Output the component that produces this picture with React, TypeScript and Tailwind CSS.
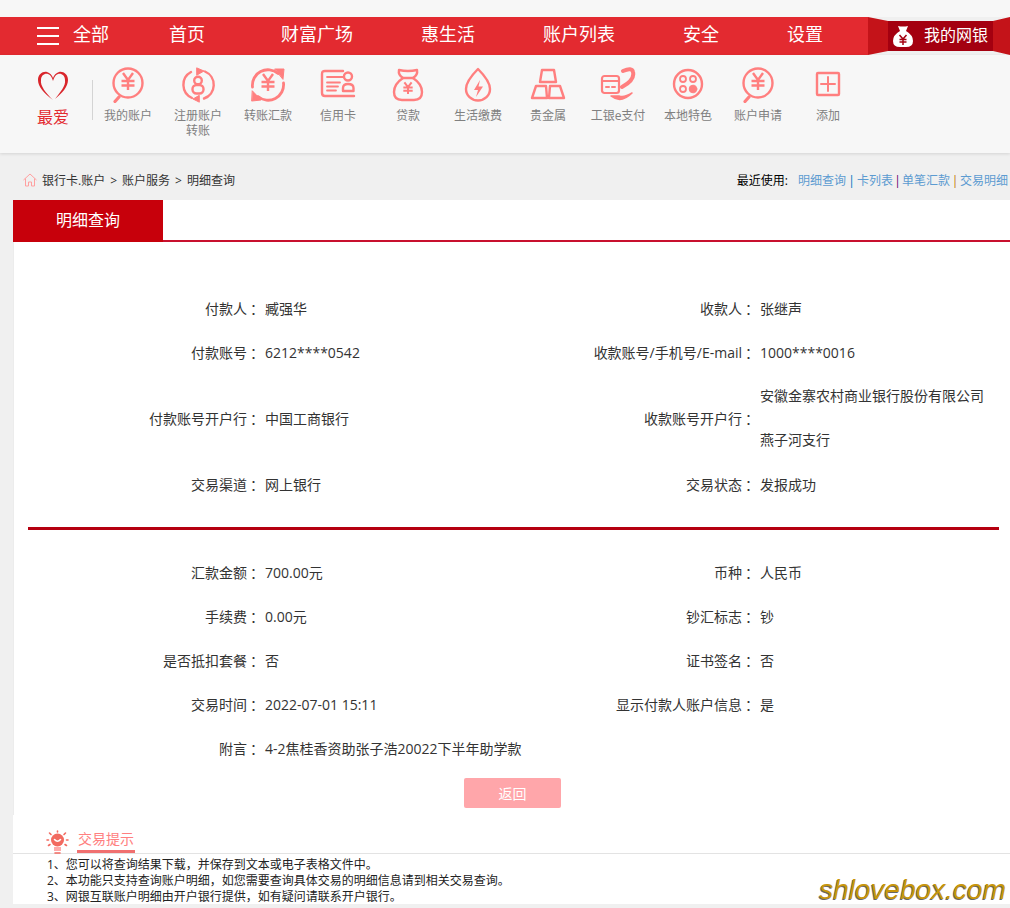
const C = "#ff7f7f";

const S = ({ children, w = 36 }: { children: React.ReactNode; w?: number }) => (
  <svg width={w} height={36} viewBox="0 0 36 36" fill="none" stroke={C} strokeWidth={2} strokeLinecap="round" strokeLinejoin="round">{children}</svg>
);

const Yen = ({ x = 18, y = 10, s = 1 }: { x?: number; y?: number; s?: number }) => (
  <g transform={`translate(${x} ${y}) scale(${s})`} strokeWidth={2.4} strokeLinecap="butt" strokeLinejoin="miter">
    <path d="M-5 -6 L0 1 L5 -6 M-6.500 2 H6.500 M-6.500 6.500 H6.500 M0 1 V11" />
  </g>
);

const icons: Record<string, React.ReactNode> = {
  coin: (
    <S>
      <circle cx="18" cy="16" r="14.5" strokeWidth="2.4" />
      <path d="M9 30 L5 34.500" strokeWidth="3.200" />
      <Yen x={18} y={12} />
    </S>
  ),
  reg: (
    <S>
      <path d="M11 5 A14.500 14.500 0 0 0 12 31 M25 4.500 A14.500 14.500 0 0 1 24 31.500" strokeWidth="2.4" />
      <path d="M17 1 L24 4 L17 8 Z M19 28.500 L13 32 L19 35 Z" fill={C} strokeWidth="1" />
      <circle cx="18" cy="13.500" r="3.800" strokeWidth="2.400" />
      <rect x="12.500" y="18" width="11" height="8.500" rx="4" strokeWidth="2.400" />
    </S>
  ),
  transfer: (
    <S>
      <path d="M2.500 20 A15.500 15.500 0 0 1 28 6.500 M33.500 16 A15.500 15.500 0 0 1 8 29.500" strokeWidth="2.800" />
      <path d="M25 2 L34 2 L33 12 Z M2.500 24 L11 33 L2 34 Z" fill={C} strokeWidth="1" />
      <Yen x={18} y={13} />
    </S>
  ),
  card: (
    <S>
      <path d="M23 4 H5 Q2 4 2 7 V26 Q2 29 5 29 H34" strokeWidth="2.400" />
      <path d="M7 10 H23 M7 15.500 H20 M7 19.500 H18 M7 23.500 H16" strokeWidth="1.800" />
      <circle cx="28" cy="9.500" r="4" strokeWidth="2.400" />
      <path d="M23 24 V21 Q23 17 28 17 Q33.500 17 33.500 21 V24 Z" strokeWidth="2.400" />
    </S>
  ),
  bag: (
    <S>
      <path d="M9 3 Q18 5 27 3 Q28 8 23 11 H13 Q8 8 9 3 Z" strokeWidth="2.400" />
      <path d="M13 11 Q4 17 4 25 Q4 33 12 33 H24 Q32 33 32 25 Q32 17 23 11" strokeWidth="2.400" />
      <g transform="translate(18 19) scale(.72)" strokeLinecap="butt"><path d="M-5 -5 L0 1.500 L5 -5 M-6.500 2 H6.500 M-6.500 6.500 H6.500 M0 1.500 V11" strokeWidth="2.800" /></g>
    </S>
  ),
  drop: (
    <S>
      <path d="M18 2 Q6 14 6 22 A12 11.500 0 0 0 30 22 Q30 14 18 2 Z" strokeWidth="2.400" />
      <path d="M20 13 L14 23 H18 L16 30 L23 19.500 H18.500 Z" fill={C} stroke="none" />
    </S>
  ),
  gold: (
    <S>
      <path d="M12 3 H24 L26 15 H10 Z M6 19 H16 L17 31 H2 Z M20 19 H30 L34 31 H19 Z" strokeWidth="2.400" />
    </S>
  ),
  pay: (
    <S>
      <path d="M23 4 Q32 0 33 5 Q35 13 22 20" strokeWidth="4" />
      <path d="M11 29 Q21 37 32 26 Q24 31 19 29 Z" fill={C} strokeWidth="1.500" />
      <rect x="2" y="9" width="17" height="17" rx="2.500" fill="#f7f7f7" strokeWidth="2.200" />
      <path d="M3 14 H18" strokeWidth="2.200" />
      <path d="M6 20 H9 M12 20 H15" strokeWidth="2" />
    </S>
  ),
  local: (
    <S>
      <circle cx="18" cy="17" r="14" strokeWidth="2.400" />
      <circle cx="13" cy="12" r="3" strokeWidth="1.800" />
      <circle cx="23" cy="12" r="3" strokeWidth="1.800" />
      <circle cx="13" cy="22" r="3" strokeWidth="1.800" />
      <circle cx="23" cy="22" r="3.800" fill={C} strokeWidth="1" />
    </S>
  ),
  add: (
    <S>
      <rect x="7" y="6" width="22" height="22" rx="1" strokeWidth="2.400" />
      <path d="M18 10 V24 M11 17 H25" strokeWidth="2" />
    </S>
  ),
};

const tools: { cx: number; icon: string; lines: string[] }[] = [
  { cx: 128, icon: "coin", lines: ["我的账户"] },
  { cx: 198, icon: "reg", lines: ["注册账户", "转账"] },
  { cx: 268, icon: "transfer", lines: ["转账汇款"] },
  { cx: 338, icon: "card", lines: ["信用卡"] },
  { cx: 408, icon: "bag", lines: ["贷款"] },
  { cx: 478, icon: "drop", lines: ["生活缴费"] },
  { cx: 548, icon: "gold", lines: ["贵金属"] },
  { cx: 618, icon: "pay", lines: ["工银e支付"] },
  { cx: 688, icon: "local", lines: ["本地特色"] },
  { cx: 758, icon: "coin", lines: ["账户申请"] },
  { cx: 828, icon: "add", lines: ["添加"] },
];

const navItems: [string, string][] = [
  ["首页", "w-[112px]"],
  ["财富广场", "w-[140px]"],
  ["惠生活", "w-[122px]"],
  ["账户列表", "w-[140px]"],
  ["安全", "w-[104px]"],
  ["设置", "w-[60px]"],
];

function Row({ l1, v1, l2, v2, tall }: { l1: string; v1: string; l2?: string; v2?: React.ReactNode; tall?: boolean }) {
  return (
    <div className={`flex items-center whitespace-nowrap ${tall ? "h-[88px]" : "h-[44px]"}`}>
      <div className="w-[234px] text-right">{l1}</div>
      <div className="w-[18px] pl-[3px]">：</div>
      <div className="w-[245px]">{v1}</div>
      {l2 && <div className="w-[232px] text-right">{l2}</div>}
      {l2 && <div className="w-[18px] pl-[3px]">：</div>}
      {v2 && <div className="w-[240px]">{v2}</div>}
    </div>
  );
}

export default function App() {
  return (
    <div className="w-[1010px] h-[908px] overflow-hidden bg-[#f0f0f0] text-[14px] text-[#333333] font-['Open_Sans','Noto_Sans_CJK_SC',sans-serif]">
      {/* header */}
      <div className="h-[17px] bg-[#f7f7f7]" />
      <div className="relative h-[38px] bg-[#e32a30] flex items-center text-white text-[18px]">
        <div className="ml-[37px] w-[22px] flex flex-col gap-[6px]">
          <div className="h-[2px] bg-white" />
          <div className="h-[2px] bg-white" />
          <div className="h-[2px] bg-white" />
        </div>
        <div className="ml-[14px] w-[96px] mb-[3px]">全部</div>
        {navItems.map(([t, w]) => (
          <div key={t} className={`${w} mb-[3px]`}>{t}</div>
        ))}
        <div className="absolute left-[868px] top-0 w-[142px] h-[38px] bg-[#f0f0f0]" />
        <div className="absolute left-[868px] top-0 w-[142px] h-[38px] bg-[#c41319] [clip-path:polygon(0_0,20px_4px,125px_4px,142px_0,142px_38px,125px_34px,20px_34px,0_38px)]" />
        <div className="absolute left-[888px] top-[4px] w-[105px] h-[30px] bg-[#a40010] flex items-center text-[16px]">
          <svg className="ml-[5px]" width="20" height="22" viewBox="0 0 20 22">
            <path d="M5 1 Q10 2 15 1 L13 6 Q20 10 20 16 Q20 22 13 22 H7 Q0 22 0 16 Q0 10 7 6 Z" fill="#fff" />
            <path d="M6.500 10 L10 14 L13.500 10 M6.500 14.500 H13.500 M6.500 17 H13.500 M10 14 V20" stroke="#a40010" strokeWidth="1.500" fill="none" />
          </svg>
          <span className="ml-[11px] mb-[3px]">我的网银</span>
        </div>
      </div>

      {/* toolbar */}
      <div className="relative h-[98px] bg-[#f7f7f7] shadow-[0_1px_3px_rgba(0,0,0,0.12)]">
        <div className="absolute left-[36px] top-[15px] flex flex-col items-center w-[34px]">
          <svg width="32" height="32" viewBox="0 0 32 32" fill="none">
            <path d="M16 30 C7 23 1 17 1 10 C1 4 6 1 10 2 C13 3 15 5 16 8 C17 5 19 3 22 2 C26 1 31 4 31 10 C31 17 25 23 18 29 C23 22 29 16 28 10 C28 5 24 3 21 4 C18 5 17 8 16 11 C15 8 14 5 11 4 C8 3 4 5 4 10 C3 16 9 23 16 30 Z" fill="#d9252b" />
          </svg>
          <div className="mt-[4px] text-[16px] leading-[22px] text-[#e32a30] whitespace-nowrap">最爱</div>
        </div>
        <div className="absolute left-[92px] top-[25px] w-px h-[40px] bg-[#d4d4d4]" />
        <div className="absolute left-[93px] top-[12px] flex">
          {tools.map((t) => (
            <div key={t.cx} className="w-[70px] flex flex-col items-center text-[12px] leading-[15px] text-[#808080]">
              <div className="h-[41px]">{icons[t.icon]}</div>
              {t.lines.map((x) => (
                <div key={x} className="whitespace-nowrap">{x}</div>
              ))}
            </div>
          ))}
        </div>
      </div>

      {/* breadcrumb */}
      <div className="h-[47px] pt-[9px] flex items-center text-[12px] whitespace-nowrap">
        <svg className="ml-[23px] mb-[2px]" width="14" height="14" viewBox="0 0 14 14" fill="none" stroke="#ffa0a0" strokeWidth="1">
          <path d="M0.500 7 L7 1 L13.500 7 M2.500 5.500 V13 H5.500 V9 H8.500 V13 H11.500 V5.500" />
        </svg>
        <span className="ml-[5px]">银行卡.账户</span>
        <span className="mx-[5px]">&gt;</span>
        <span>账户服务</span>
        <span className="mx-[5px]">&gt;</span>
        <span>明细查询</span>
        <span className="ml-auto text-black">最近使用:</span>
        <span className="ml-[10px] w-[212px] flex overflow-hidden text-[#5c9bd1]">
          <span>明细查询</span>
          <span className="w-[11px] text-center text-[#0070c0]">|</span>
          <span>卡列表</span>
          <span className="w-[9px] text-center text-[#66006e]">|</span>
          <span>单笔汇款</span>
          <span className="w-[10px] text-center text-[#c07000]">|</span>
          <span>交易明细</span>
        </span>
      </div>

      {/* panel */}
      <div className="ml-[13px] h-[704px] bg-white">
        <div className="h-[42px] border-b-2 border-[#c8102e] flex">
          <div className="w-[150px] h-[42px] pb-[3px] bg-[#c7000b] text-white text-[16px] flex items-center justify-center">明细查询</div>
        </div>
        <div className="border-l border-[#ececec] h-[573px] relative">
          <div className="pt-[44px] -ml-px">
            <Row l1="付款人" v1="臧强华" l2="收款人" v2="张继声" />
            <Row l1="付款账号" v1="6212****0542" l2="收款账号/手机号/E-mail" v2="1000****0016" />
            <Row
              l1="付款账号开户行"
              v1="中国工商银行"
              l2="收款账号开户行"
              tall
              v2={
                <div className="leading-[44px]">
                  <div>安徽金寨农村商业银行股份有限公司</div>
                  <div>燕子河支行</div>
                </div>
              }
            />
            <Row l1="交易渠道" v1="网上银行" l2="交易状态" v2="发报成功" />
            <div className="ml-[15px] mr-[11px] mt-[21px] mb-[20px] h-[3px] bg-[#b50010]" />
            <Row l1="汇款金额" v1="700.00元" l2="币种" v2="人民币" />
            <Row l1="手续费" v1="0.00元" l2="钞汇标志" v2="钞" />
            <Row l1="是否抵扣套餐" v1="否" l2="证书签名" v2="否" />
            <Row l1="交易时间" v1="2022-07-01 15:11" l2="显示付款人账户信息" v2="是" />
            <Row l1="附言" v1="4-2焦桂香资助张子浩20022下半年助学款" />
            <div className="mt-[8px] ml-[451px] w-[97px] h-[30px] rounded-[2px] bg-[#ffa6aa] text-white flex items-center justify-center">返回</div>
          </div>
        </div>

        {/* tips */}
        <div className="relative h-[39px] border-b border-[#e3e3e3]">
          <svg className="absolute left-[33px] top-[15px]" width="23" height="24" viewBox="0 0 23 24" fill="none" stroke="#f26a60" strokeWidth="1.600" strokeLinecap="round">
            <circle cx="11.500" cy="10" r="6.500" fill="#f26a60" stroke="none" />
            <path d="M8 17 H15 V21 H8 Z" fill="#ffaaaa" stroke="none" />
            <path d="M9 23 H14" />
            <path d="M11.500 1 V2 M3.500 3 L5 4.500 M19.500 3 L18 4.500 M1 10 H2.500 M20.500 10 H22 M2.500 15.500 L4 14.500 M20.500 15.500 L19 14.500" />
            <path d="M8.500 9.500 Q11.500 13 14.500 9.500" stroke="#fff" />
          </svg>
          <div className="absolute left-[64px] top-[15px] h-[23px] border-b-[3px] border-[#f07070] text-[#ff8080] leading-[18px] px-px">交易提示</div>
        </div>
        <div className="relative pl-[34px] text-[12px] leading-[16px] pt-[3px] text-[#222]">
          <div>1、您可以将查询结果下载，并保存到文本或电子表格文件中。</div>
          <div>2、本功能只支持查询账户明细，如您需要查询具体交易的明细信息请到相关交易查询。</div>
          <div>3、网银互联账户明细由开户银行提供，如有疑问请联系开户银行。</div>
          <div className="absolute right-[4px] top-[20px] text-[28px] leading-[32px] italic text-[#c8960c] [text-shadow:-1px_1px_0_#666] font-['Liberation_Sans',sans-serif]">shlovebox.com</div>
        </div>
      </div>
    </div>
  );
}
